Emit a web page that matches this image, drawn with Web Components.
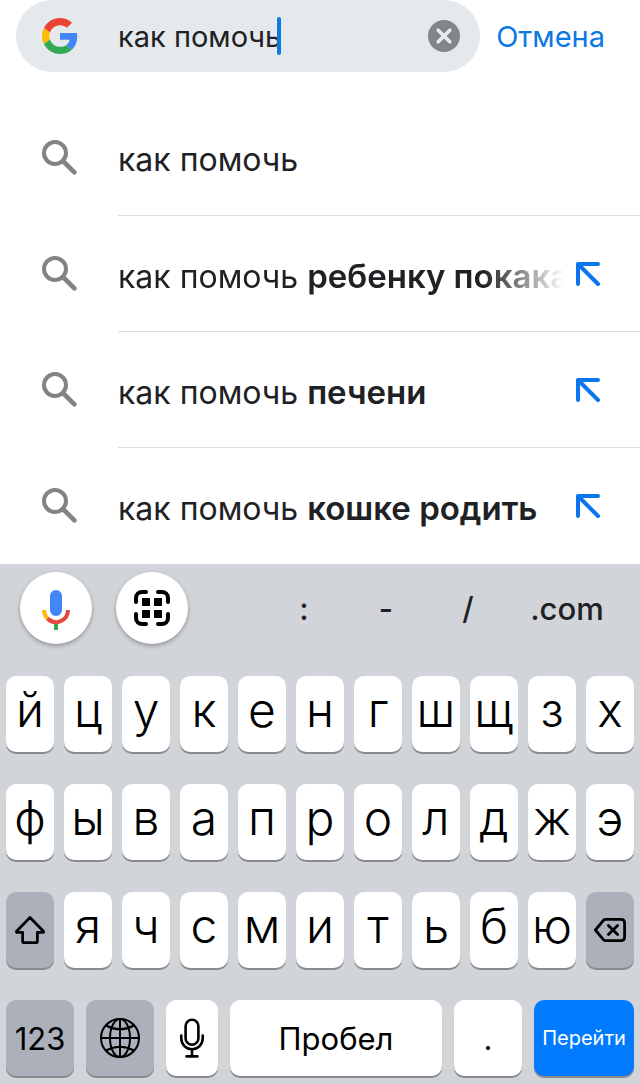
<!DOCTYPE html>
<html lang="ru">
<head>
<meta charset="utf-8">
<meta name="viewport" content="width=device-width, initial-scale=1">
<title>как помочь</title>
<style>
    body {
        margin: 0;
        background: #fff;
        color: #202124;
        font-family: Inter, "Liberation Sans", sans-serif;
    }
</style>
</head>
<body>
<search-screen></search-screen>

<script>
const RESET = `
    * { box-sizing: border-box; }
    button, input {
        margin: 0;
        padding: 0;
        border: 0;
        background: none;
        color: inherit;
        font: inherit;
        outline: none;
    }
    button { cursor: pointer; }
    svg { display: block; flex: none; }
`;

const ICONS = {
    google: `<svg width="36" height="36" viewBox="0 0 48 48">
        <path fill="#EA4335" d="M24 9.5c3.54 0 6.71 1.22 9.21 3.6l6.85-6.85C35.9 2.38 30.47 0 24 0 14.62 0 6.51 5.38 2.56 13.22l7.98 6.19C12.43 13.72 17.74 9.5 24 9.5z"/>
        <path fill="#4285F4" d="M46.98 24.55c0-1.57-.15-3.09-.38-4.55H24v9.02h12.94c-.58 2.96-2.26 5.48-4.78 7.18l7.73 6c4.51-4.18 7.09-10.36 7.09-17.65z"/>
        <path fill="#FBBC05" d="M10.53 28.59c-.48-1.45-.76-2.99-.76-4.59s.27-3.14.76-4.59l-7.98-6.19C.92 16.46 0 20.12 0 24c0 3.88.92 7.54 2.56 10.78l7.97-6.19z"/>
        <path fill="#34A853" d="M24 48c6.48 0 11.93-2.13 15.89-5.81l-7.73-6c-2.15 1.45-4.92 2.3-8.16 2.3-6.26 0-11.57-4.22-13.47-9.91l-7.98 6.19C6.51 42.62 14.62 48 24 48z"/>
    </svg>`,
    clear: `<svg width="32" height="32" viewBox="0 0 32 32">
        <circle cx="16" cy="16" r="16" fill="#80868a"/>
        <path d="M10.2 10.2l11.6 11.6M21.8 10.2L10.2 21.8" stroke="#e8eaed" stroke-width="3.6" stroke-linecap="round"/>
    </svg>`,
    search: `<svg width="36" height="36" viewBox="0 0 36 36" fill="none" stroke="#808487">
        <circle cx="14" cy="13" r="11" stroke-width="4"/>
        <path d="M22 21L33.4 32.4" stroke-width="4.6" stroke-linecap="round"/>
    </svg>`,
    fill: `<svg width="24" height="24" viewBox="0 0 24 24" fill="none" stroke="#0b75ee" stroke-width="4" stroke-linecap="round" stroke-linejoin="round">
        <path d="M2 22V2H22M2 2L22 22"/>
    </svg>`,
    voice: `<svg width="28" height="44" viewBox="0 -4 28 44" fill="none" stroke-width="4">
        <rect x="8" width="12" height="26" rx="6" fill="#4285F4"/>
        <path d="M2 20A12 12 0 0 0 5.5 28.5" stroke="#F9BB08"/>
        <path d="M5.5 28.5A12 12 0 0 0 26 20" stroke="#E8453C"/>
        <path d="M14 34V40" stroke="#34A853"/>
    </svg>`,
    lens: `<svg width="36" height="36" viewBox="0 0 36 36" fill="none" stroke="#000" stroke-width="4" stroke-linecap="round">
        <path d="M2 12V8A6 6 0 0 1 8 2H12M24 2H28A6 6 0 0 1 34 8V12M34 24V28A6 6 0 0 1 28 34H24M12 34H8A6 6 0 0 1 2 28V24"/>
        <path d="M8 8h8v8H8zM20 8h8v8h-8zM8 20h8v8H8zM20 20h8v8h-8z" fill="#000" stroke="none"/>
    </svg>`,
    shift: `<svg width="30" height="28" viewBox="0 0 30 28" fill="none" stroke="#000" stroke-width="2.8" stroke-linejoin="round">
        <path d="M15 1.6L28.4 15.2Q29 16.4 27.6 16.4H22.4V25.2Q22.4 26.6 21 26.6H9Q7.6 26.6 7.6 25.2V16.4H2.4Q1 16.4 1.6 15.2Z"/>
    </svg>`,
    backspace: `<svg width="32" height="24" viewBox="0 0 32 24" fill="none" stroke="#000" stroke-width="2.8" stroke-linejoin="round" stroke-linecap="round">
        <path d="M11.5 1.4H27Q30.6 1.4 30.6 5V19Q30.6 22.6 27 22.6H11.5Q10.4 22.6 9.6 21.8L1.4 12L9.6 2.2Q10.4 1.4 11.5 1.4Z"/>
        <path d="M14.4 7.4l9.2 9.2M23.6 7.4l-9.2 9.2"/>
    </svg>`,
    globe: `<svg width="40" height="40" viewBox="0 0 40 40" fill="none" stroke="#000" stroke-width="2">
        <circle cx="20" cy="20" r="19"/>
        <ellipse cx="20" cy="20" rx="10" ry="19"/>
        <path d="M20 1V39M1 20H39M6 7.5Q20 15 34 7.5M6 32.5Q20 25 34 32.5"/>
    </svg>`,
    mic: `<svg width="24" height="40" viewBox="0 0 24 40" fill="none" stroke="#000" stroke-width="2.6" stroke-linecap="round">
        <rect x="5.6" y="1.8" width="12.8" height="25" rx="6.4"/>
        <path d="M1.3 17.5V20.5A10.7 10.7 0 0 0 22.7 20.5V17.5M12 31.5V38M6.5 38.4H17.5"/>
    </svg>`
};

class SearchBar extends HTMLElement {
    constructor() {
        super();
        this.attachShadow({mode: 'open'});
        this.shadowRoot.innerHTML = `
            <style>
                ${RESET}
                :host {
                    display: flex;
                    align-items: center;
                    padding: 0 35px 0 16px;
                    font-size: 29px;
                }
                form {
                    flex: 1;
                    min-width: 0;
                    height: 72px;
                    display: flex;
                    align-items: center;
                    padding: 0 20px 0 26px;
                    border-radius: 36px;
                    background: #e6e9ec;
                }
                label { margin-right: 40px; }
                input {
                    field-sizing: content;
                    min-width: 0;
                    height: 40px;
                    caret-color: transparent;
                }
                .caret {
                    flex: none;
                    width: 4px;
                    height: 38px;
                    margin-left: -4px;
                    border-radius: 2px;
                    background: #0b78e3;
                }
                .clear { margin-left: auto; border-radius: 50%; }
                .cancel { margin-left: 16px; color: #0b78e3; }
            </style>
            <form role="search">
                <label for="query" aria-label="Поиск">${ICONS.google}</label>
                <input id="query" type="text" value="${this.getAttribute('value')}" autocomplete="off">
                <span class="caret"></span>
                <button class="clear" type="button" aria-label="Очистить">${ICONS.clear}</button>
            </form>
            <button class="cancel" type="button"><slot></slot></button>
        `;
        this.input = this.shadowRoot.querySelector('input');
        this.shadowRoot.querySelector('form').addEventListener('submit', (e) => e.preventDefault());
        this.shadowRoot.querySelector('.clear').addEventListener('click', () => {
            this.input.value = '';
            this.input.focus();
        });
    }
}

class SuggestionRow extends HTMLElement {
    constructor() {
        super();
        this.attachShadow({mode: 'open'});
        const arrow = this.hasAttribute('fillable')
            ? `<button class="fill" type="button" aria-label="Подставить">${ICONS.fill}</button>`
            : '';
        this.shadowRoot.innerHTML = `
            <style>
                ${RESET}
                :host {
                    display: flex;
                    padding-left: 41px;
                    height: 116px;
                    font-size: 32px;
                }
                .icon { width: 77px; display: flex; align-items: center; flex: none; }
                .body {
                    flex: 1;
                    min-width: 0;
                    display: flex;
                    align-items: center;
                    padding-right: 40px;
                    border-bottom: 1px solid #dadce0;
                }
                :host(:last-of-type) .body { border-bottom-color: transparent; }
                .text {
                    flex: 1;
                    min-width: 0;
                    padding-top: 4px;
                    overflow: hidden;
                    white-space: nowrap;
                    text-align: left;
                }
                :host([fade]) .text {
                    -webkit-mask-image: linear-gradient(to left, transparent, #000 80px);
                    mask-image: linear-gradient(to left, transparent, #000 80px);
                }
                .fill { margin-left: 12px; }
                ::slotted(b) { font-size: 33px; font-weight: 600; }
            </style>
            <span class="icon">${ICONS.search}</span>
            <div class="body">
                <button class="text" type="button"><slot></slot></button>
                ${arrow}
            </div>
        `;
    }
}

class AccessoryBar extends HTMLElement {
    constructor() {
        super();
        this.attachShadow({mode: 'open'});
        this.shadowRoot.innerHTML = `
            <style>
                ${RESET}
                :host {
                    display: flex;
                    gap: 24px;
                    padding: 8px 15px 32px 20px;
                    font-size: 31px;
                    font-weight: 500;
                }
                .round {
                    width: 72px;
                    height: 72px;
                    flex: none;
                    display: grid;
                    place-items: center;
                    border-radius: 50%;
                    background: #fff;
                    box-shadow: 0 2px 4px rgba(0, 0, 0, 0.3);
                }
                .symbols {
                    flex: 1;
                    display: grid;
                    grid-template-columns: 82fr 82fr 82fr 116fr;
                    margin-left: 51px;
                }
            </style>
            <button class="round" type="button" aria-label="Голосовой поиск">${ICONS.voice}</button>
            <button class="round" type="button" aria-label="Сканировать">${ICONS.lens}</button>
            <div class="symbols">
                ${[':', '-', '/', '.com'].map(s => `<button type="button">${s}</button>`).join('')}
            </div>
        `;
    }
}

class KeyCap extends HTMLElement {
    constructor() {
        super();
        this.attachShadow({mode: 'open'});
        const icon = this.getAttribute('icon');
        const label = this.getAttribute('label');
        this.shadowRoot.innerHTML = `
            <style>
                ${RESET}
                :host {
                    display: block;
                    min-width: 0;
                    color: #000;
                    font-size: 48px;
                    font-weight: 350;
                }
                button {
                    width: 100%;
                    height: 76px;
                    display: flex;
                    align-items: center;
                    justify-content: center;
                    padding-bottom: 8px;
                    border-radius: 10px;
                    background: #fff;
                    box-shadow: 0 2px 0 #898a8d;
                    line-height: 1;
                }
                :host([icon]) button, :host([small]) button, :host([primary]) button { padding-bottom: 0; }
                :host([small]) { font-size: 31px; font-weight: 400; }
                :host([dark]) button { background: #abb0ba; }
                :host([primary]) { font-size: 20px; font-weight: 400; color: #fff; }
                :host([primary]) button { background: #007aff; }
            </style>
            <button type="button" ${label ? `aria-label="${label}"` : ''}>${icon ? ICONS[icon] : '<slot></slot>'}</button>
        `;
    }
}

class ScreenKeyboard extends HTMLElement {
    constructor() {
        super();
        this.attachShadow({mode: 'open'});
        const keys = (letters) => [...letters].map(l => `<key-cap>${l}</key-cap>`).join('');
        this.shadowRoot.innerHTML = `
            <style>
                :host { display: block; background: #d1d4d9; }
                .rows { display: grid; gap: 32px; padding: 0 6px 8px; }
                .row { display: grid; grid-template-columns: repeat(11, 1fr); gap: 10px; }
                .bottom { grid-template-columns: 68fr 68fr 52fr 212fr 68fr 100fr; gap: 12px; }
            </style>
            <accessory-bar></accessory-bar>
            <div class="rows">
                <div class="row">${keys('йцукенгшщзх')}</div>
                <div class="row">${keys('фывапролджэ')}</div>
                <div class="row">
                    <key-cap icon="shift" label="Регистр" dark></key-cap>
                    ${keys('ячсмитьбю')}
                    <key-cap icon="backspace" label="Удалить" dark></key-cap>
                </div>
                <div class="row bottom">
                    <key-cap small dark>123</key-cap>
                    <key-cap icon="globe" label="Язык" dark></key-cap>
                    <key-cap icon="mic" label="Диктовка"></key-cap>
                    <key-cap small>Пробел</key-cap>
                    <key-cap small>.</key-cap>
                    <key-cap primary>Перейти</key-cap>
                </div>
            </div>
        `;
    }
}

class SearchScreen extends HTMLElement {
    constructor() {
        super();
        this.attachShadow({mode: 'open'});
        this.shadowRoot.innerHTML = `
            <style>
                :host { display: flex; flex-direction: column; min-height: 100vh; }
                main { flex: 1; padding-top: 28px; }
            </style>
            <search-bar value="как помочь">Отмена</search-bar>
            <main>
                <suggestion-row>как помочь</suggestion-row>
                <suggestion-row fillable fade>как помочь <b>ребенку покакать</b></suggestion-row>
                <suggestion-row fillable>как помочь <b>печени</b></suggestion-row>
                <suggestion-row fillable>как помочь <b>кошке родить</b></suggestion-row>
            </main>
            <screen-keyboard></screen-keyboard>
        `;
    }
}

customElements.define('search-bar', SearchBar);
customElements.define('suggestion-row', SuggestionRow);
customElements.define('accessory-bar', AccessoryBar);
customElements.define('key-cap', KeyCap);
customElements.define('screen-keyboard', ScreenKeyboard);
customElements.define('search-screen', SearchScreen);
</script>
</body>
</html>
